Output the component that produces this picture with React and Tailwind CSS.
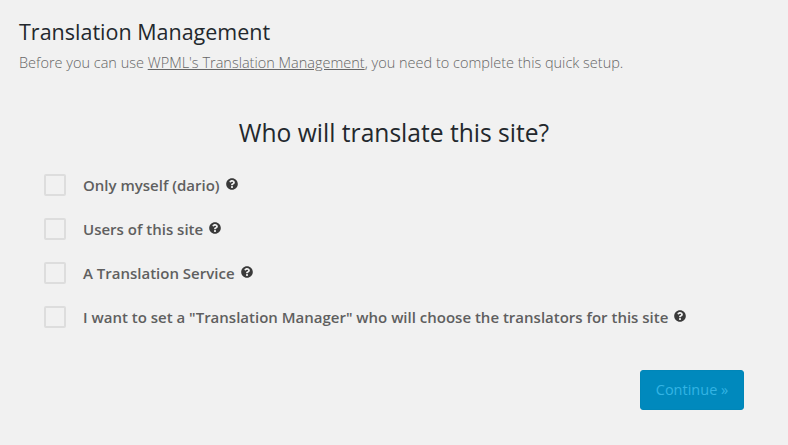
import { FaQuestionCircle } from 'react-icons/fa';

const options = [
  'Only myself (dario)',
  'Users of this site',
  'A Translation Service',
  'I want to set a "Translation Manager" who will choose the translators for this site',
];

export default function App() {
  return (
    <div className="h-[445px] w-[788px] overflow-hidden bg-[#f1f1f1] font-['Open_Sans',sans-serif]">
      <div className="pl-[19px] pt-[17px]">
        <h1 className="text-[21.5px] leading-[30px] text-[#23282d]">Translation Management</h1>
        <p className="mt-[6px] text-[14.5px] leading-[20px] font-light text-[#666]">
          Before you can use <a className="underline">WPML's Translation Management</a>, you need to complete this quick setup.
        </p>
      </div>

      <h2 className="mt-[43px] text-center text-[24.6px] leading-[34px] text-[#23282d]">Who will translate this site?</h2>

      <ul className="mt-[13px] pl-[44px]">
        {options.map((label) => (
          <li key={label} className="flex h-[44px] items-center">
            <span className="mr-[17px] h-[22px] w-[22px] rounded-[2px] border-2 border-[#dddddd]" />
            <span className="text-[15px] font-semibold text-[#5f5f5f]">{label}</span>
            <FaQuestionCircle className="mb-[3px] ml-[6px] text-[12px] text-[#3a3a3a]" />
          </li>
        ))}
      </ul>

      <div className="mt-[31px] flex justify-end pr-[44px]">
        <button className="h-[40px] w-[104px] rounded-[3px] border border-[#0086b8] bg-[#0089bd] text-[14.5px] font-normal text-[#33b4e4]">
          Continue »
        </button>
      </div>
    </div>
  );
}
